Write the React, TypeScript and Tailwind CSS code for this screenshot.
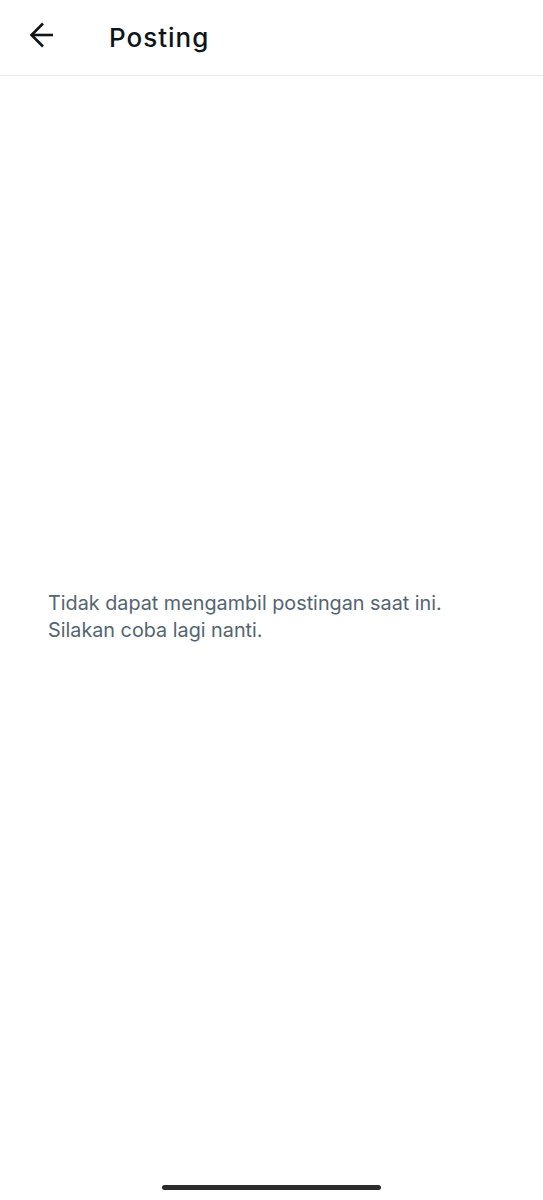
import React from 'react';

const BackIcon: React.FC = () => (
    <svg viewBox="0 0 25 26" className="w-[25px] h-[26px]" fill="none" stroke="currentColor" strokeWidth={2.6}>
        <path d="M24 13H2.5" />
        <path d="M14 1.5L2.5 13 14 24.5" />
    </svg>
);

const App: React.FC = () => {
    return (
        <div className="w-[543px] h-[1200px] bg-white flex flex-col font-['Inter','Liberation_Sans',sans-serif]">
            <div className="h-[76px] flex items-center border-b border-[#e6e9eb] shrink-0">
                <button className="ml-[29px] mt-[-6px] text-[#0f1419]">
                    <BackIcon />
                </button>
                <h1 className="ml-[55px] text-[26px] font-medium text-[#0f1419] tracking-[1px]">Posting</h1>
            </div>

            <div className="flex-grow flex flex-col justify-start">
                <div className="mt-[514px] px-[48px]">
                    <p className="text-[19.8px] leading-[27px] text-[#536471]">
                        Tidak dapat mengambil postingan saat ini.<br />
                        Silakan coba lagi nanti.
                    </p>
                </div>
            </div>

            <div className="h-[30px] flex flex-col items-center shrink-0">
                <div className="mt-[15px] w-[219px] h-[5px] rounded-full bg-[#2b2b2b]" />
            </div>
        </div>
    );
};

export default App;
